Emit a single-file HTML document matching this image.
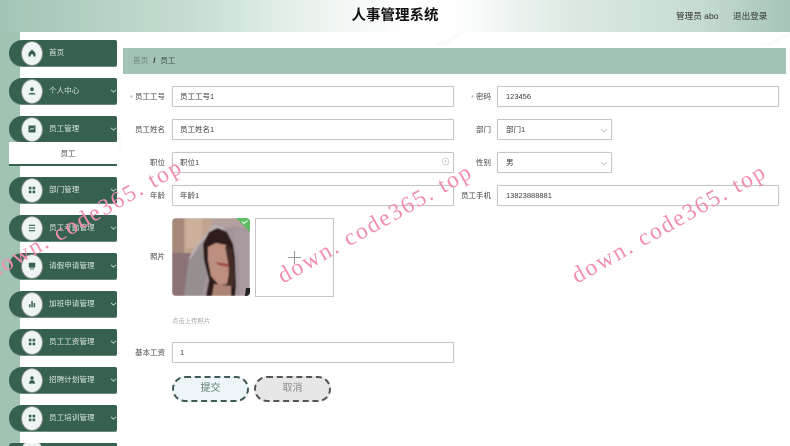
<!DOCTYPE html>
<html lang="zh"><head><meta charset="utf-8"><title>人事管理系统</title>
<style>
*{box-sizing:border-box;margin:0;padding:0}
html,body{width:790px;height:446px;overflow:hidden;background:#fff}
body{position:relative;font-family:"Liberation Sans","Noto Sans CJK SC",sans-serif;font-size:7.5px;color:#555}
.a{position:absolute}
#hd{left:0;top:0;width:790px;height:32px;background:linear-gradient(90deg,#a3c4b4 0,#c6ded1 190px,#f2f7f4 340px,#fff 410px,#fff 450px,#dfebe5 560px,#c6dcd0 700px,#a6c5b7 790px)}
#lb{left:0;top:32px;width:20px;height:414px;background:#a0c3b2}
#title{left:295px;top:6px;width:200px;text-align:center;font-size:14.5px;font-weight:700;color:#111;line-height:20px}
.m{position:absolute;left:9px;width:108px;height:26px;background:#36614f;border-radius:13px 2px 2px 13px;color:#dbe7e1;line-height:26px;padding-left:40px;font-size:7.6px;box-shadow:0 1px 0 #6b8a7d;overflow:hidden}
.m i{position:absolute;left:12px;top:.5px;width:22px;height:25px;border-radius:50%;background:#eef3f4;border:1.5px solid #84908a}
.m svg.ic{position:absolute;left:17px;top:7px;width:12px;height:12px}
.m svg.ch{position:absolute;left:100.500px;top:11px;width:7px;height:4px}
.l{position:absolute;text-align:right;width:60px;line-height:12px;color:#444}
.s{color:#999;position:absolute;margin-left:-5px;margin-top:1px}
.f{position:absolute;height:21px;border:1px solid #c6c8c8;background:#fff;border-radius:1px;line-height:19px;padding-left:8px;color:#3a3a3a;box-shadow:0 0 1px #ddd}
.w{position:absolute;font-family:"Liberation Serif",serif;font-size:23.5px;letter-spacing:1.9px;color:#f28eb0;white-space:pre;transform:rotate(-29.400deg);transform-origin:0 100%;line-height:26px}
.btn{position:absolute;top:376px;width:77px;height:26px;border:2px dashed #3f5a52;border-radius:13px;text-align:center;font-size:10px;line-height:22px}
</style></head><body>
<div class="a" id="hd"></div>
<div class="a" id="lb"></div>
<svg class="a" style="left:0;top:32px" width="790" height="414"><g fill="#fafbfb"><path d="M432 14 458 0H466L445 14Z"/><path d="M760 14 790 0V3L772 14Z"/><path d="M118 100h3v20h-3Z"/></g></svg>
<div class="a" id="title">人事管理系统</div>
<div class="a" style="left:676px;top:10px;font-size:8.6px;line-height:12px;color:#333">管理员 abo</div>
<div class="a" style="left:733px;top:10px;font-size:8.6px;line-height:12px;color:#333">退出登录</div>

<div class="m" style="top:40px"><i></i><svg class="ic" viewBox="0 0 12 12"><path d="M6 2.500 9.500 6V9.500H7.300V7.500H4.700V9.500H2.500V6Z" fill="#36614f"/></svg>首页</div>
<div class="m" style="top:78px"><i></i><svg class="ic" viewBox="0 0 12 12"><circle cx="6" cy="4.200" r="1.800" fill="#36614f"/><path d="M2.500 9.500C2.500 7.300 9.500 7.300 9.500 9.500Z" fill="#36614f"/></svg>个人中心<svg class="ch" viewBox="0 0 7 4"><path d="M1 .8 3.500 3.200 6 .8" fill="none" stroke="#cfdcd6" stroke-width=".8"/></svg></div>
<div class="m" style="top:116px"><i></i><svg class="ic" viewBox="0 0 12 12"><path d="M2.500 2.500H9.500V9.500H2.500Z" fill="#36614f"/><path d="M4 7 5.500 5.500 6.500 6.300 8.200 4.600" fill="none" stroke="#eef3f4" stroke-width=".7"/></svg>员工管理<svg class="ch" viewBox="0 0 7 4"><path d="M1 .8 3.500 3.200 6 .8" fill="none" stroke="#cfdcd6" stroke-width=".8"/></svg></div>
<div class="a" style="left:9px;top:142px;width:108px;height:24px;background:#fff;border-bottom:2px solid #36614f;padding-left:10px;text-align:center;line-height:24px;color:#444">员工</div>
<div class="m" style="top:177px"><i></i><svg class="ic" viewBox="0 0 12 12"><path d="M2.800 2.800H5.400V5.400H2.800ZM6.600 2.800H9.200V5.400H6.600ZM2.800 6.600H5.400V9.200H2.800ZM6.600 6.600H9.200V9.200H6.600Z" fill="#36614f"/></svg>部门管理<svg class="ch" viewBox="0 0 7 4"><path d="M1 .8 3.500 3.200 6 .8" fill="none" stroke="#cfdcd6" stroke-width=".8"/></svg></div>
<div class="m" style="top:215px"><i></i><svg class="ic" viewBox="0 0 12 12"><path d="M2.800 3.300H9.200M2.800 6H9.200M2.800 8.700H9.200" stroke="#36614f" stroke-width="1.100" fill="none"/></svg>员工考勤管理<svg class="ch" viewBox="0 0 7 4"><path d="M1 .8 3.500 3.200 6 .8" fill="none" stroke="#cfdcd6" stroke-width=".8"/></svg></div>
<div class="m" style="top:253px"><i></i><svg class="ic" viewBox="0 0 12 12"><path d="M2.800 2.800H9.200V7.600H2.800ZM4 8.500H8V9.400H4Z" fill="#36614f"/></svg>请假申请管理<svg class="ch" viewBox="0 0 7 4"><path d="M1 .8 3.500 3.200 6 .8" fill="none" stroke="#cfdcd6" stroke-width=".8"/></svg></div>
<div class="m" style="top:291px"><i></i><svg class="ic" viewBox="0 0 12 12"><path d="M3 6.200H4.500V9.300H3ZM5.300 3H6.800V9.300H5.300ZM7.600 5H9.100V9.300H7.600Z" fill="#36614f"/></svg>加班申请管理<svg class="ch" viewBox="0 0 7 4"><path d="M1 .8 3.500 3.200 6 .8" fill="none" stroke="#cfdcd6" stroke-width=".8"/></svg></div>
<div class="m" style="top:329px"><i></i><svg class="ic" viewBox="0 0 12 12"><path d="M2.800 2.800H5.400V5.400H2.800ZM6.600 2.800H9.200V5.400H6.600ZM2.800 6.600H5.400V9.200H2.800ZM6.600 6.600H9.200V9.200H6.600Z" fill="#36614f"/></svg>员工工资管理<svg class="ch" viewBox="0 0 7 4"><path d="M1 .8 3.500 3.200 6 .8" fill="none" stroke="#cfdcd6" stroke-width=".8"/></svg></div>
<div class="m" style="top:367px"><i></i><svg class="ic" viewBox="0 0 12 12"><circle cx="6" cy="4" r="1.700" fill="#36614f"/><path d="M4.400 6.200H7.600L9.500 9.600H2.500Z" fill="#36614f"/></svg>招聘计划管理<svg class="ch" viewBox="0 0 7 4"><path d="M1 .8 3.500 3.200 6 .8" fill="none" stroke="#cfdcd6" stroke-width=".8"/></svg></div>
<div class="m" style="top:405px"><i></i><svg class="ic" viewBox="0 0 12 12"><path d="M2.800 2.800H5.400V5.400H2.800ZM6.600 2.800H9.200V5.400H6.600ZM2.800 6.600H5.400V9.200H2.800ZM6.600 6.600H9.200V9.200H6.600Z" fill="#36614f"/></svg>员工培训管理<svg class="ch" viewBox="0 0 7 4"><path d="M1 .8 3.500 3.200 6 .8" fill="none" stroke="#cfdcd6" stroke-width=".8"/></svg></div>
<div class="a" style="left:9px;top:443px;width:108px;height:3px;background:#36614f;border-radius:8px 2px 0 0"></div>
<div class="a" style="left:23px;top:443px;width:18px;height:3px;background:#eef3f4;border-radius:9px 9px 0 0"></div>

<div class="a" style="left:123px;top:48px;width:663px;height:26px;background:#a3c4b4;line-height:26px;padding-left:10px;color:#3f4f48;font-size:7.6px"><span style="color:#71857c">首页</span><span style="margin:0 5px;color:#222;font-weight:700">/</span>员工</div>

<div class="l" style="left:105px;top:91px"><span class="s">*</span>员工工号</div>
<div class="f" style="left:172px;top:86px;width:282px;padding-left:7px">员工工号1</div>
<div class="l" style="left:431px;top:91px"><span class="s">*</span>密码</div>
<div class="f" style="left:497px;top:86px;width:282px">123456</div>

<div class="l" style="left:105px;top:124px">员工姓名</div>
<div class="f" style="left:172px;top:119px;width:282px;padding-left:7px">员工姓名1</div>
<div class="l" style="left:431px;top:124px">部门</div>
<div class="f" style="left:497px;top:119px;width:115px">部门1<svg class="a" style="left:102px;top:8px" width="8" height="5" viewBox="0 0 8 5"><path d="M1 1 4 4 7 1" fill="none" stroke="#bbb" stroke-width=".8"/></svg></div>

<div class="l" style="left:105px;top:157px">职位</div>
<div class="f" style="left:172px;top:152px;width:282px;padding-left:7px">职位1<svg class="a" style="left:268px;top:4px" width="9" height="9" viewBox="0 0 9 9"><circle cx="4.500" cy="4.500" r="3.400" fill="none" stroke="#c4c4c4" stroke-width=".7"/><circle cx="4.500" cy="4.500" r="1.200" fill="#d4d4d4"/></svg></div>
<div class="l" style="left:431px;top:157px">性别</div>
<div class="f" style="left:497px;top:152px;width:115px">男<svg class="a" style="left:102px;top:8px" width="8" height="5" viewBox="0 0 8 5"><path d="M1 1 4 4 7 1" fill="none" stroke="#bbb" stroke-width=".8"/></svg></div>

<div class="l" style="left:105px;top:190px">年龄</div>
<div class="f" style="left:172px;top:185px;width:282px;padding-left:7px">年龄1</div>
<div class="l" style="left:431px;top:190px">员工手机</div>
<div class="f" style="left:497px;top:185px;width:282px">13823888881</div>

<div class="l" style="left:105px;top:251px">照片</div>
<svg class="a" style="left:172px;top:218px" width="78" height="78" viewBox="0 0 78 78">
<defs><clipPath id="c"><rect width="78" height="78" rx="4"/></clipPath><filter id="b" x="-5%" y="-5%" width="110%" height="110%"><feGaussianBlur stdDeviation=".7"/></filter></defs>
<g clip-path="url(#c)">
<g filter="url(#b)">
<rect width="78" height="78" fill="#c0a391"/>
<path d="M0 0H12V35H0Z" fill="#a58878"/>
<path d="M14 0H30V30H14Z" fill="#cbb09c"/>
<path d="M0 35H20V78H0Z" fill="#8b7274"/>
<path d="M40 0H78V20H40Z" fill="#b3a09f"/>
<path d="M12 78 17 40 24 28 36 14 43 7 52 10 62 8 78 12V78Z" fill="#a3949a"/>
<path d="M17 40 30 30 35 52 30 78H12Z" fill="#968f8f"/>
<path d="M18 40 25 28 37 14 43 8 52 11" fill="none" stroke="#beb5b6" stroke-width="2"/>
<path d="M31 26 37 14 46 10 55 14 61 26 63 40 64 68 63 78H34L37 62 32 42Z" fill="#2f1f1b"/>
<path d="M36 29 44 25 54 27 56 38 57 55 55 66 47 67 39 58 36 42Z" fill="#bd8f80"/>
<path d="M53 28 60 32 63 55 62 70 56 68 57 50Z" fill="#452c28"/>
<path d="M44 44 57 46 56 49 46 47Z" fill="#a04c48"/>
<path d="M42 66 59 68 59 78H40Z" fill="#ad8374"/>
<path d="M61 22 67 40 68 78H78V14L62 10Z" fill="#a99a9f"/>
</g>
<path d="M74 70H78V78H73Z" fill="#222"/>
<path d="M64 0H78V14Z" fill="#5dbb63"/>
<path d="M70 3.500 72 5.500 75.500 2.500" fill="none" stroke="#fff" stroke-width=".9"/>
</g></svg>
<div class="a" style="left:255px;top:218px;width:79px;height:79px;border:1px solid #c4c4c6;background:#fff"></div>
<svg class="a" style="left:288px;top:251px" width="13" height="13" viewBox="0 0 13 13"><path d="M6.500 0V13M0 6.500H13" stroke="#999" stroke-width="1.100"/></svg>
<div class="a" style="left:172px;top:317px;font-size:6.400px;line-height:10px;color:#aaa">点击上传照片</div>

<div class="l" style="left:105px;top:347px">基本工资</div>
<div class="f" style="left:172px;top:342px;width:282px;padding-left:7px">1</div>

<div class="btn" style="left:172px;background:#edf5f9;color:#5d7a70">提交</div>
<div class="btn" style="left:254px;background:#e7e7e7;color:#8a8a8a;border-color:#555">取消</div>

<div class="w" style="left:-4px;top:258px">down. code365. top</div>
<div class="w" style="left:286px;top:263px">down. code365. top</div>
<div class="w" style="left:580px;top:263px">down. code365. top</div>
</body></html>
